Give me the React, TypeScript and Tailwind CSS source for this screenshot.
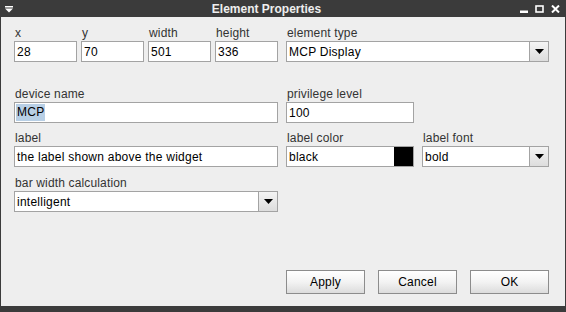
import type { ReactNode } from "react";

function FieldLabel({ children }: { children: ReactNode }) {
  return <div className="h-[16px] leading-[16px] pl-[1px] text-[12px] tracking-[0.15px] text-[#333333]">{children}</div>;
}

function TextBox({ value, selected, className = "" }: { value: string; selected?: boolean; className?: string }) {
  return (
    <div className={`h-[21px] border border-[#a3a3a3] bg-white flex items-center pl-[1px] text-[12px] tracking-[0.25px] text-black ${className}`}>
      {selected ? <span className="bg-[#b8cfe5] leading-[17px] px-[1px]">{value}</span> : <span className="pl-[1px]">{value}</span>}
    </div>
  );
}

function ComboBox({ value, className = "" }: { value: string; className?: string }) {
  return (
    <div className={`h-[21px] border border-[#a3a3a3] bg-white flex text-[12px] tracking-[0.25px] text-black ${className}`}>
      <div className="flex-1 flex items-center pl-[2px]">{value}</div>
      <div className="w-[19px] border-l border-[#a3a3a3] bg-gradient-to-b from-[#f4f4f4] to-[#dddddd] flex items-center justify-center">
        <svg width="9" height="5" viewBox="0 0 9 5">
          <path d="M0 0h9L4.5 5z" fill="#000" />
        </svg>
      </div>
    </div>
  );
}

function DialogButton({ children }: { children: ReactNode }) {
  return (
    <button className="w-[79px] h-[24px] border border-[#8c8c8c] bg-gradient-to-b from-[#ffffff] via-[#f3f3f3] to-[#dcdcdc] text-[12px] tracking-[0.2px] text-black">
      {children}
    </button>
  );
}

export default function App() {
  return (
    <div className="w-[566px] h-[312px] bg-[#3b3b3b] flex flex-col font-['Liberation_Sans',Arial,sans-serif]">
      {/* title bar */}
      <div className="h-[17px] flex items-center px-[5px] text-[#eeeeee]">
        <svg width="8" height="7" viewBox="0 0 8 7" className="mt-[1px]">
          <rect x="0" y="0" width="8" height="1.5" fill="#fff" />
          <path d="M0 2.5h8L4 6.5z" fill="#fff" />
        </svg>
        <div className="flex-1 text-center text-[12px] font-bold">Element Properties</div>
        <div className="flex items-center gap-[7px] mr-[1px]">
          <svg width="8" height="8" viewBox="0 0 8 8">
            <rect x="0" y="5.5" width="8" height="2.5" fill="#fff" />
          </svg>
          <svg width="9" height="8" viewBox="0 0 9 8">
            <rect x="1" y="1" width="7" height="6" fill="none" stroke="#fff" strokeWidth="1.6" />
          </svg>
          <svg width="9" height="8" viewBox="0 0 9 8">
            <path d="M1 0.5l7 7M8 0.5l-7 7" stroke="#fff" strokeWidth="2" />
          </svg>
        </div>
      </div>

      {/* content */}
      <div className="flex-1 mx-[1px] mb-[6px] bg-[#eeeeee] pl-[13px] pt-[8px] flex flex-col">
        <div className="flex gap-[8px]">
          <div className="w-[264px] flex gap-[4px]">
            <div className="w-[63px]">
              <FieldLabel>x</FieldLabel>
              <TextBox value="28" />
            </div>
            <div className="w-[63px]">
              <FieldLabel>y</FieldLabel>
              <TextBox value="70" />
            </div>
            <div className="w-[63px]">
              <FieldLabel>width</FieldLabel>
              <TextBox value="501" />
            </div>
            <div className="w-[63px]">
              <FieldLabel>height</FieldLabel>
              <TextBox value="336" />
            </div>
          </div>
          <div className="w-[263px]">
            <FieldLabel>element type</FieldLabel>
            <ComboBox value="MCP Display" />
          </div>
        </div>

        <div className="flex gap-[8px] mt-[24px]">
          <div className="w-[264px]">
            <FieldLabel>device name</FieldLabel>
            <TextBox value="MCP" selected />
          </div>
          <div className="w-[128px]">
            <FieldLabel>privilege level</FieldLabel>
            <TextBox value="100" />
          </div>
        </div>

        <div className="flex gap-[8px] mt-[7px]">
          <div className="w-[264px]">
            <FieldLabel>label</FieldLabel>
            <TextBox value="the label shown above the widget" />
          </div>
          <div className="w-[128px]">
            <FieldLabel>label color</FieldLabel>
            <div className="h-[21px] border border-[#a3a3a3] bg-white flex text-[12px] tracking-[0.25px] text-black">
              <div className="flex-1 flex items-center pl-[2px]">black</div>
              <div className="w-[19px] bg-black" />
            </div>
          </div>
          <div className="w-[127px]">
            <FieldLabel>label font</FieldLabel>
            <ComboBox value="bold" />
          </div>
        </div>

        <div className="flex mt-[8px]">
          <div className="w-[264px]">
            <FieldLabel>bar width calculation</FieldLabel>
            <ComboBox value="intelligent" />
          </div>
        </div>

        <div className="mt-auto mb-[12px] ml-[272px] flex gap-[13px]">
          <DialogButton>Apply</DialogButton>
          <DialogButton>Cancel</DialogButton>
          <DialogButton>OK</DialogButton>
        </div>
      </div>
    </div>
  );
}
